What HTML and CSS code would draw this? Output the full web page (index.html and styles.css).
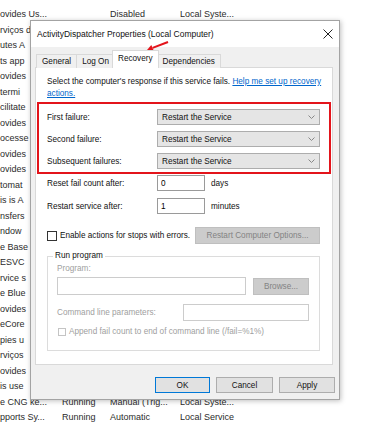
FILE: index.html
```html
<!DOCTYPE html>
<html lang="en">
<head>
    <meta charset="UTF-8">
    <title>ActivityDispatcher Properties</title>
    <link rel="stylesheet" href="styles.css">
</head>
<body>
<ul class="services">
    <li><span>ovides Us...</span><span></span><span>Disabled</span><span>Local Syste...</span></li>
    <li><span>rviços de</span></li>
    <li><span>utes A</span></li>
    <li><span>ts app</span></li>
    <li><span>ovides</span></li>
    <li><span>termi</span></li>
    <li><span>cilitate</span></li>
    <li><span>ovides</span></li>
    <li><span>ocesse</span></li>
    <li><span>ovides</span></li>
    <li><span>ovides</span></li>
    <li><span>tomat</span></li>
    <li><span>is is A</span></li>
    <li><span>nsfers</span></li>
    <li><span>ndow</span></li>
    <li><span>e Base</span></li>
    <li><span>ESVC</span></li>
    <li><span>rvice s</span></li>
    <li><span>e Blue</span></li>
    <li><span>ovides</span></li>
    <li><span>eCore</span></li>
    <li><span>pies u</span></li>
    <li><span>rviços</span></li>
    <li><span>ovides</span></li>
    <li><span>is use</span></li>
    <li><span>e CNG ke...</span><span>Running</span><span>Manual (Trig...</span><span>Local Syste...</span></li>
    <li><span>pports Sy...</span><span>Running</span><span>Automatic</span><span>Local Service</span></li>
</ul>

<div class="dialog">
    <div class="titlebar">
        <span>ActivityDispatcher Properties (Local Computer)</span>
        <svg class="close" width="10" height="10" viewBox="0 0 10 10">
            <path d="M0.5 0.5 L9.5 9.5 M9.5 0.5 L0.5 9.5" stroke="#222" stroke-width="1" fill="none"/>
        </svg>
    </div>
    <div class="tabs">
        <span class="tab">General</span>
        <span class="tab">Log On</span>
        <span class="tab active">Recovery</span>
        <span class="tab">Dependencies</span>
    </div>
    <div class="page">
        <p class="intro">Select the computer's response if this service fails. <a href="#">Help me set up recovery<br>actions.</a></p>
        <div class="marked">
            <div class="row">
                <span class="label">First failure:</span>
                <div class="select">Restart the Service<svg width="7" height="4" viewBox="0 0 7 4"><polyline points="0.5,0.5 3.5,3.5 6.5,0.5" stroke="#888" fill="none"/></svg></div>
            </div>
            <div class="row">
                <span class="label">Second failure:</span>
                <div class="select">Restart the Service<svg width="7" height="4" viewBox="0 0 7 4"><polyline points="0.5,0.5 3.5,3.5 6.5,0.5" stroke="#888" fill="none"/></svg></div>
            </div>
            <div class="row">
                <span class="label">Subsequent failures:</span>
                <div class="select">Restart the Service<svg width="7" height="4" viewBox="0 0 7 4"><polyline points="0.5,0.5 3.5,3.5 6.5,0.5" stroke="#888" fill="none"/></svg></div>
            </div>
        </div>
        <div class="row count">
            <span class="label">Reset fail count after:</span>
            <input class="num" type="text" value="0">
            <span>days</span>
        </div>
        <div class="row count second">
            <span class="label">Restart service after:</span>
            <input class="num" type="text" value="1">
            <span>minutes</span>
        </div>
        <div class="row stops">
            <input class="check" type="checkbox">
            <span>Enable actions for stops with errors.</span>
            <button class="options" disabled>Restart Computer Options...</button>
        </div>
        <fieldset class="program">
            <legend>Run program</legend>
            <div class="dim">Program:</div>
            <div class="row prog">
                <input class="path" type="text" disabled>
                <button class="browse" disabled>Browse...</button>
            </div>
            <div class="row cmd">
                <span class="dim">Command line parameters:</span>
                <input class="params" type="text" disabled>
            </div>
            <div class="row append">
                <input class="check small" type="checkbox" disabled>
                <span class="dim">Append fail count to end of command line (/fail=%1%)</span>
            </div>
        </fieldset>
    </div>
    <div class="buttons">
        <button class="default">OK</button>
        <button class="cancel">Cancel</button>
        <button class="apply">Apply</button>
    </div>
</div>

<svg class="arrow" width="32" height="20" viewBox="0 0 32 20">
    <line x1="28" y1="6" x2="12.6" y2="11.9" stroke="#e3141b" stroke-width="2"/>
    <polygon points="7,14 13.9,14.9 11.3,8.9" fill="#e3141b"/>
</svg>
</body>
</html>
```

FILE: styles.css
```css
body{
    width: 367px;
    height: 441px;
    margin: 0;
    position: relative;
    overflow: hidden;
    background: #fff;
    font-family: "Liberation Sans", Arial, sans-serif;
}
/* services list behind the dialog */
.services{
    margin: 0;
    padding: 7px 0 0 0;
    list-style: none;
    font-size: 9px;
    color: #2b2b2b;
}
.services li{
    display: grid;
    grid-template-columns: 62px 48px 70px 1fr;
    height: 15.5px;
    line-height: 15.5px;
    white-space: nowrap;
    overflow: hidden;
}
/* dialog window */
.dialog{
    position: absolute;
    left: 30px;
    top: 20px;
    width: 310px;
    height: 380px;
    box-sizing: border-box;
    border: 1px solid #a3a3a3;
    box-shadow: 1px 1px 5px rgba(0, 0, 0, 0.25);
    background: #f0f0f0;
    display: flex;
    flex-direction: column;
    font-size: 8.2px;
    color: #111;
}
.titlebar{
    height: 26px;
    flex: none;
    display: flex;
    align-items: center;
    justify-content: space-between;
    padding: 0 6px;
    background: #fff;
    font-size: 8.5px;
}
.tabs{
    display: flex;
    align-items: flex-end;
    height: 21px;
    padding: 0 0 0 5px;
    position: relative;
    z-index: 1;
}
.tab{
    height: 14px;
    line-height: 14px;
    padding: 0 5px;
    box-sizing: border-box;
    border: 1px solid #d9d9d9;
    border-bottom: none;
    margin-right: -1px;
    background: #f0f0f0;
}
.tab.active{
    height: 18px;
    line-height: 16px;
    margin: 0 -2px 0 -2px;
    padding: 0 5px;
    background: #fff;
    position: relative;
}
.page{
    height: 298px;
    margin: -1px 6px 0 4px;
    box-sizing: border-box;
    border: 1px solid #d9d9d9;
    background: #fff;
    padding: 0 12px 0 11px;
}
.intro{
    margin: 0;
    padding-top: 8px;
    line-height: 12px;
    white-space: nowrap;
}
.intro a{
    color: #0066cc;
}
.row{
    display: flex;
    align-items: center;
}
.label{
    width: 110px;
    flex: none;
}
.marked{
    margin: 2px -11px 0 -10px;
    border: 2px solid #e3141b;
    padding: 5px 9px 3px 8px;
    display: flex;
    flex-direction: column;
    gap: 6px;
}
.select{
    width: 163px;
    height: 16px;
    box-sizing: border-box;
    border: 1px solid #adadad;
    background: #e5e5e5;
    padding: 0 4px;
    display: flex;
    align-items: center;
    justify-content: space-between;
}
.count{
    margin-top: 1px;
}
.count.second{
    margin-top: 7px;
}
.num{
    width: 48px;
    height: 16px;
    box-sizing: border-box;
    border: 1px solid #9a9a9a;
    padding: 0 3px;
    margin: 0 6px 0 0;
    font: 8.2px "Liberation Sans", Arial, sans-serif;
}
.check{
    appearance: none;
    width: 10px;
    height: 10px;
    margin: 0 3px 0 0;
    border: 1px solid #333;
    background: #fff;
}
.check.small{
    width: 8px;
    height: 8px;
    border-color: #c4c4c4;
}
.stops{
    margin-top: 13px;
}
button{
    height: 17px;
    box-sizing: border-box;
    border: 1px solid #adadad;
    background: #e1e1e1;
    padding: 0;
    font: 8.2px "Liberation Sans", Arial, sans-serif;
    color: #111;
}
button:disabled{
    background: #cccccc;
    border-color: #bfbfbf;
    color: #838383;
}
.options{
    width: 125px;
    margin-left: auto;
}
.program{
    margin: 7px 0 0 0;
    padding: 3px 10px 9px 9px;
    border: 1px solid #dcdcdc;
    height: 100px;
    box-sizing: border-box;
}
.program legend{
    padding: 0 2px;
    margin-left: -4px;
    line-height: 10px;
}
.dim{
    color: #a0a0a0;
}
.prog{
    margin-top: 4px;
    justify-content: space-between;
}
.path{
    width: 189px;
    height: 18px;
    box-sizing: border-box;
    border: 1px solid #cccccc;
    background: #fff;
    margin: 0;
}
.browse{
    width: 56px;
}
.cmd{
    margin-top: 9px;
    justify-content: space-between;
}
.params{
    width: 126px;
    height: 17px;
    box-sizing: border-box;
    border: 1px solid #cccccc;
    background: #fff;
    margin: 0;
}
.append{
    margin-top: 6px;
    padding-left: 1px;
}
.buttons{
    display: flex;
    justify-content: flex-end;
    gap: 6px;
    margin-top: 12px;
    padding-right: 4px;
}
.buttons button{
    height: 16px;
}
.default{
    width: 55px;
    border-color: #0078d7;
}
.cancel{
    width: 57px;
}
.apply{
    width: 56px;
}
/* annotation arrow pointing at the Recovery tab */
.arrow{
    position: absolute;
    left: 140px;
    top: 36px;
}
```
